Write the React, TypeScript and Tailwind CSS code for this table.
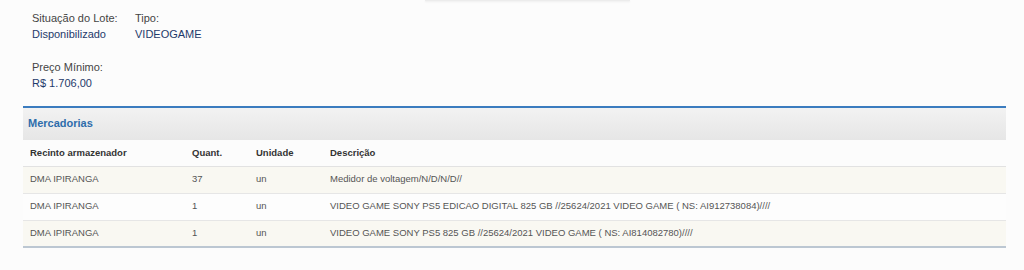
import React from "react";

const rows = [
  { recinto: "DMA IPIRANGA", quant: "37", unidade: "un", descricao: "Medidor de voltagem/N/D/N/D//" },
  {
    recinto: "DMA IPIRANGA",
    quant: "1",
    unidade: "un",
    descricao: "VIDEO GAME SONY PS5 EDICAO DIGITAL 825 GB //25624/2021 VIDEO GAME ( NS: AI912738084)////",
  },
  {
    recinto: "DMA IPIRANGA",
    quant: "1",
    unidade: "un",
    descricao: "VIDEO GAME SONY PS5 825 GB //25624/2021 VIDEO GAME ( NS: AI814082780)////",
  },
];

function Field({ label, value }: { label: string; value: string }) {
  return (
    <div className="flex flex-col">
      <span className="text-[#444]">{label}</span>
      <span className="text-[#1f3a6b]">{value}</span>
    </div>
  );
}

export default function App() {
  return (
    <div className="h-[270px] w-[1024px] overflow-hidden bg-[#fcfcfc] font-['Liberation_Sans',Arial,sans-serif]">
      {/* edge of the card above */}
      <div className="pl-[425px]">
        <div className="h-px w-[205px] bg-[#ececec] shadow-[0_1px_2px_rgba(0,0,0,0.08)]" />
      </div>

      {/* lot details */}
      <div className="pl-[32px] pt-[9px] text-[11px] leading-[16px]">
        <div className="flex">
          <div className="w-[103px]">
            <Field label="Situação do Lote:" value="Disponibilizado" />
          </div>
          <Field label="Tipo:" value="VIDEOGAME" />
        </div>
        <div className="mt-[17px]">
          <Field label="Preço Mínimo:" value="R$ 1.706,00" />
        </div>
      </div>

      {/* Mercadorias panel */}
      <div className="ml-[23px] mt-[15px] w-[983px] border-t-2 border-[#3b7cbf]">
        <div className="h-[32px] bg-gradient-to-b from-[#f2f2f2] to-[#e6e6e6] px-[5px] pt-[7px] text-[11px] font-bold leading-[16px] text-[#2e6dab]">
          Mercadorias
        </div>
        <table className="w-full table-fixed border-collapse border-b-2 border-[#bcc7d2] text-left text-[9.5px]">
          <colgroup>
            <col className="w-[162px]" />
            <col className="w-[64px]" />
            <col className="w-[74px]" />
            <col />
          </colgroup>
          <thead>
            <tr className="h-[26px] border-b border-[#e2e2e2] bg-[#fcfcfc] text-[#333]">
              <th className="px-[7px] font-bold">Recinto armazenador</th>
              <th className="px-[7px] font-bold">Quant.</th>
              <th className="px-[7px] font-bold">Unidade</th>
              <th className="px-[7px] font-bold">Descrição</th>
            </tr>
          </thead>
          <tbody className="text-[#555]">
            {rows.map((r, i) => (
              <tr
                key={i}
                className={
                  "h-[27px] border-t border-[#e6e6e6] " + (i % 2 === 0 ? "bg-[#f9f8f2]" : "bg-[#fdfdfd]")
                }
              >
                <td className="px-[7px]">{r.recinto}</td>
                <td className="px-[7px]">{r.quant}</td>
                <td className="px-[7px]">{r.unidade}</td>
                <td className="px-[7px] whitespace-nowrap">{r.descricao}</td>
              </tr>
            ))}
          </tbody>
        </table>
      </div>
    </div>
  );
}
